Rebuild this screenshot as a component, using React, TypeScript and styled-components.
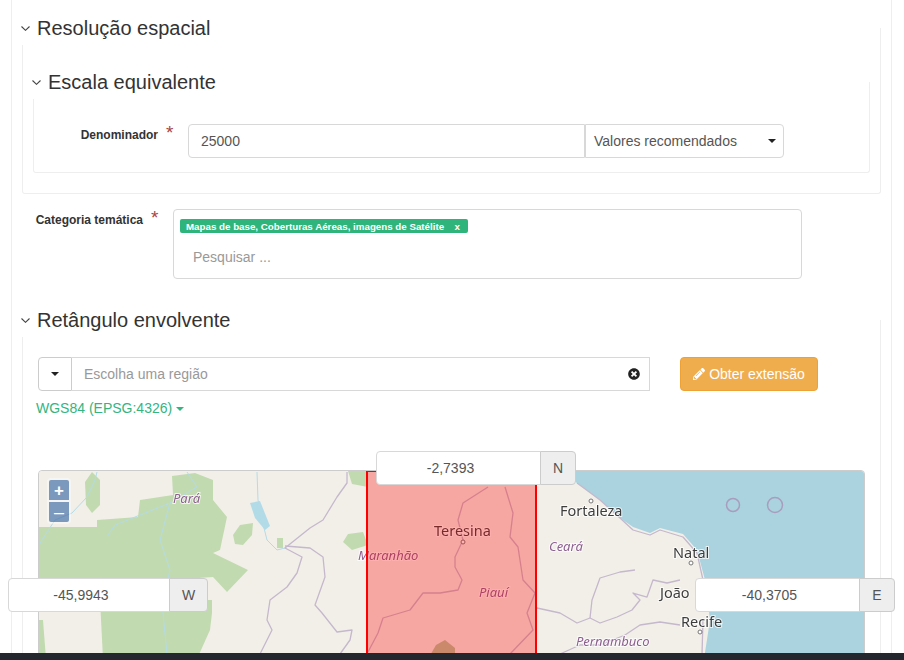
import React from 'react';
import styled, { createGlobalStyle } from 'styled-components';
import { FaPencilAlt, FaTimesCircle } from 'react-icons/fa';

const GlobalStyle = createGlobalStyle`
  html, body {
    margin: 0;
    padding: 0;
    background: #fff;
    font-family: "Liberation Sans", Arial, sans-serif;
    color: #333;
  }
  * {
    box-sizing: border-box;
  }
`;

const Page = styled.div`
  height: 660px;
  display: flex;
  flex-direction: column;
  overflow: hidden;
`;

const Sheet = styled.main`
  flex: 1;
  min-height: 0;
  width: 881px;
  margin-left: 11px;
  padding: 28px 10px 0;
  border-left: 1px solid #eee;
  border-right: 1px solid #eee;
`;

const FooterBar = styled.div`
  position: relative;
  z-index: 2;
  height: 7px;
  flex: none;
  background: #24272d;
`;

const Section = styled.section<{ $top?: number; $pad: string }>`
  display: flow-root;
  margin-top: ${(p) => p.$top ?? 0}px;
  padding: ${(p) => p.$pad};
  border: 1px solid #eee;
  border-top: none;
  border-radius: 0 0 3px 3px;
`;

const Title = styled.h4<{ $indent: number }>`
  width: fit-content;
  height: 34px;
  margin: -17px 0 0 ${(p) => p.$indent}px;
  position: relative;
  display: flex;
  align-items: center;
  gap: 7px;
  background: #fff;
  font-size: 20px;
  font-weight: 400;
  color: #333;
`;

const Chevron = () => (
  <svg width="9" height="5" viewBox="0 0 9 5" fill="none" stroke="#444" strokeWidth="1.1">
    <polyline points="0.5,0.5 4.5,4.3 8.5,0.5" />
  </svg>
);

const FormRow = styled.div<{ $top?: number }>`
  display: flex;
  align-items: flex-start;
  margin-top: ${(p) => p.$top ?? 0}px;
`;

const Label = styled.label<{ $width: number }>`
  flex: none;
  width: ${(p) => p.$width}px;
  padding: 3px 13px 0 0;
  text-align: right;
  font-size: 12px;
  font-weight: 700;
  line-height: 15px;
  color: #333;
`;

const Star = styled.span`
  display: inline-block;
  width: 10px;
  margin-left: 8px;
  margin-right: -1px;
  text-align: left;
  font-size: 19px;
  font-weight: 400;
  line-height: 12px;
  color: #a94442;
`;

const TextBox = styled.div<{ $width: number }>`
  width: ${(p) => p.$width}px;
  height: 34px;
  padding: 0 12px;
  display: flex;
  align-items: center;
  border: 1px solid #d8d8d8;
  border-radius: 4px 0 0 4px;
  font-size: 14px;
  color: #555;
`;

const SelectBox = styled.div`
  width: 199px;
  height: 34px;
  padding: 0 7px 0 8px;
  display: flex;
  align-items: center;
  justify-content: space-between;
  border: 1px solid #d8d8d8;
  border-radius: 0 4px 4px 0;
  font-size: 14px;
  color: #555;
`;

const Caret = styled.span<{ $color?: string }>`
  flex: none;
  width: 0;
  height: 0;
  border-top: 4px solid ${(p) => p.$color ?? '#222'};
  border-left: 4px solid transparent;
  border-right: 4px solid transparent;
`;

const TagBox = styled.div`
  width: 629px;
  height: 70px;
  padding: 9px 6px 0;
  border: 1px solid #d8d8d8;
  border-radius: 4px;
`;

const Tag = styled.div`
  width: 288px;
  height: 14px;
  padding: 0 8px 0 6px;
  display: flex;
  align-items: center;
  justify-content: space-between;
  background: #2fb57b;
  border-radius: 2px;
  font-size: 9.75px;
  font-weight: 700;
  color: #fff;
`;

const Placeholder = styled.div`
  margin: 15px 0 0 13px;
  font-size: 14px;
  line-height: 18px;
  color: #999;
`;

const SearchRow = styled.div`
  display: flex;
  margin: 20px 0 0;
`;

const DropAddon = styled.div`
  width: 34px;
  height: 34px;
  display: flex;
  align-items: center;
  justify-content: center;
  border: 1px solid #ccc;
  border-radius: 4px 0 0 4px;
`;

const SearchBox = styled.div`
  width: 578px;
  height: 34px;
  padding: 0 9px 0 12px;
  display: flex;
  align-items: center;
  justify-content: space-between;
  border: 1px solid #d8d8d8;
  border-left-width: 0;
  font-size: 14px;
  color: #999;
`;

const ActionButton = styled.button`
  width: 138px;
  height: 34px;
  margin-left: 30px;
  padding: 0;
  display: flex;
  align-items: center;
  justify-content: center;
  gap: 4px;
  background: #f0ad4e;
  border: 1px solid #eea236;
  border-radius: 4px;
  font-family: inherit;
  font-size: 14px;
  color: #fff;
`;

const ProjectionLink = styled.div`
  display: flex;
  align-items: center;
  gap: 4px;
  margin: 9px 0 0 -2px;
  font-size: 14px;
  line-height: 17px;
  color: #34b580;
`;

const MapFrame = styled.div`
  position: relative;
  width: 827px;
  height: 190px;
  margin-top: 53px;
  border: 1px solid #ccc;
  border-radius: 4px;
  background: #f2efe9;
`;

const MapDrawing = styled.svg`
  display: block;
  width: 825px;
  height: 188px;
  border-radius: 3px;
  filter: blur(0.4px);
`;

const PlaceLabel = styled.text<{ $italic?: boolean; $size: number }>`
  font-family: "Noto Sans", sans-serif;
  font-size: ${(p) => p.$size}px;
  font-style: ${(p) => (p.$italic ? 'italic' : 'normal')};
  fill: ${(p) => (p.$italic ? '#8c5f8f' : '#3d3d3d')};
  stroke: rgba(255, 255, 255, 0.75);
  stroke-width: 2px;
  paint-order: stroke;
`;

const ZoomControl = styled.div`
  position: absolute;
  left: 8px;
  top: 7px;
  padding: 2px;
  background: rgba(255, 255, 255, 0.4);
  border-radius: 4px;
`;

const ZoomButton = styled.div<{ $bottom?: boolean }>`
  width: 20px;
  height: 20px;
  margin-top: ${(p) => (p.$bottom ? 2 : 0)}px;
  display: flex;
  align-items: center;
  justify-content: center;
  background: rgba(0, 60, 136, 0.5);
  border-radius: ${(p) => (p.$bottom ? '0 0 2px 2px' : '2px 2px 0 0')};
  font-size: ${(p) => (p.$bottom ? 18 : 17)}px;
  font-weight: ${(p) => (p.$bottom ? 400 : 700)};
  line-height: 1;
  color: #fff;
`;

const CoordGroup = styled.div<{ $left: number; $top: number }>`
  position: absolute;
  left: ${(p) => p.$left}px;
  top: ${(p) => p.$top}px;
  display: flex;
  width: 200px;
  height: 34px;
  font-size: 14px;
  color: #555;
`;

const CoordInput = styled.div`
  flex: 1;
  display: flex;
  align-items: center;
  justify-content: center;
  padding-right: 16px;
  background: #fff;
  border: 1px solid #d8d8d8;
  border-radius: 4px 0 0 4px;
`;

const CoordAddon = styled.div<{ $width: number }>`
  flex: none;
  width: ${(p) => p.$width}px;
  margin-left: -1px;
  display: flex;
  align-items: center;
  justify-content: center;
  background: #eee;
  border: 1px solid #ccc;
  border-radius: 0 4px 4px 0;
`;

const forests = [
  '39,527 97,527 97,520 138,517 140,500 173,495 172,476 195,473 213,480 213,500 227,517 220,550 213,553 248,570 227,592 213,577 170,580 39,580',
  '100,600 212,600 212,613 210,630 197,659 103,659',
  '85,482 92,472 100,480 100,505 92,513 86,505',
  '233,535 240,525 253,523 252,535 243,545 235,544',
  '343,542 348,534 363,532 368,545 352,550',
  '348,471 368,471 368,487 352,484',
  '277,538 283,538 283,548 277,548',
  '39,620 43,620 46,659 39,659',
];

const rivers = [
  '97,472 95,480 87,497 72,513 55,520 40,543',
  '187,472 197,487 170,503 160,540 170,570 165,590 163,613 167,654',
  '257,472 258,500 262,520 267,540 277,550 285,548',
  '170,503 140,515 115,525 108,535',
];

const borders = [
  '347,472 347,483 337,497 323,520 310,528 285,548 302,557 297,573 287,587 270,600 267,620 272,630 260,654',
  '285,546 310,548 323,557 325,577 315,605 322,613 337,632 352,630 350,640 340,654',
  '488,487 463,503 458,520 463,540 455,557 455,567 462,580 458,590 440,593 423,593 410,610 383,618 378,633 368,652',
  '505,487 513,513 510,537 518,547 523,580 535,593 527,613 533,630 510,654',
  '537,608 560,613 577,623 590,618 600,623 617,617 632,610 640,600 633,593 647,597 653,580 667,583 680,580',
  '635,570 620,572 600,578 592,600 590,618',
  '560,654 580,645 600,645 625,635 640,625 660,622 680,625',
  '577,483 600,500 620,518 633,530 650,535 660,530 683,537 697,553 703,580',
  '703,620 702,654',
];

const labels = [
  { x: 173, y: 503, size: 13, italic: true, text: 'Pará' },
  { x: 358, y: 560, size: 13, italic: true, text: 'Maranhão' },
  { x: 479, y: 597, size: 13, italic: true, text: 'Piauí' },
  { x: 549, y: 551, size: 13, italic: true, text: 'Ceará' },
  { x: 576, y: 646, size: 13, italic: true, text: 'Pernambuco' },
  { x: 434, y: 536, size: 14.5, text: 'Teresina' },
  { x: 560, y: 516, size: 14.5, text: 'Fortaleza' },
  { x: 673, y: 558, size: 14.5, text: 'Natal' },
  { x: 660, y: 598, size: 14.5, text: 'João' },
  { x: 681, y: 627, size: 14.5, text: 'Recife' },
];

const cities = [
  [463, 542],
  [591, 501],
  [691, 563],
  [700, 632],
];

const RegionMap = () => (
  <MapDrawing viewBox="39 471 825 188">
    <rect x="39" y="471" width="825" height="188" fill="#f2efe9" />
    <polygon points="560,471 577,483 600,500 620,518 633,527 650,533 660,528 683,534 697,550 705,580 710,620 704,659 864,659 864,471" fill="#aad3df" />
    {forests.map((points) => (
      <polygon key={points} points={points} fill="#c2dab0" />
    ))}
    <polygon points="250,503 260,501 270,526 265,530 255,518" fill="#b2dbe8" />
    <polygon points="428,659 436,645 445,640 455,648 455,659" fill="#b4c49a" />
    {rivers.map((points) => (
      <polyline key={points} points={points} fill="none" stroke="#b3dbe6" strokeWidth="1" />
    ))}
    {borders.map((points) => (
      <polyline key={points} points={points} fill="none" stroke="#c4b8cc" strokeWidth="1.3" strokeLinejoin="round" />
    ))}
    <circle cx="733" cy="505" r="6.5" fill="none" stroke="#a99dbd" strokeWidth="1.5" />
    <circle cx="775" cy="505" r="7.5" fill="none" stroke="#a99dbd" strokeWidth="1.5" />
    {cities.map(([cx, cy]) => (
      <circle key={cx} cx={cx} cy={cy} r="2" fill="#fff" stroke="#777" />
    ))}
    {labels.map((label) => (
      <PlaceLabel key={label.text} x={label.x} y={label.y} $size={label.size} $italic={label.italic}>
        {label.text}
      </PlaceLabel>
    ))}
    <rect x="367" y="471" width="169" height="200" fill="rgba(255, 0, 0, 0.3)" stroke="#f00" strokeWidth="2" />
  </MapDrawing>
);

const App = () => (
  <Page>
    <GlobalStyle />
    <Sheet>
      <Section $pad="0 10px 20px">
        <Title $indent={-12}>
          <Chevron />
          Resolução espacial
        </Title>
        <Section $top={37} $pad="0 0 14px">
          <Title $indent={-2}>
            <Chevron />
            Escala equivalente
          </Title>
          <FormRow $top={25}>
            <Label $width={154}>
              Denominador
              <Star>*</Star>
            </Label>
            <TextBox $width={397}>25000</TextBox>
            <SelectBox>
              Valores recomendados
              <Caret />
            </SelectBox>
          </FormRow>
        </Section>
      </Section>

      <FormRow $top={15}>
        <Label $width={151}>
          Categoria temática
          <Star>*</Star>
        </Label>
        <TagBox>
          <Tag>
            <span>Mapas de base, Coberturas Aéreas, imagens de Satélite</span>
            <span>x</span>
          </Tag>
          <Placeholder>Pesquisar ...</Placeholder>
        </TagBox>
      </FormRow>

      <Section $top={41} $pad="0 15px">
        <Title $indent={-17}>
          <Chevron />
          Retângulo envolvente
        </Title>
        <SearchRow>
          <DropAddon>
            <Caret />
          </DropAddon>
          <SearchBox>
            Escolha uma região
            <FaTimesCircle size={12} color="#222" />
          </SearchBox>
          <ActionButton>
            <FaPencilAlt size={12} />
            Obter extensão
          </ActionButton>
        </SearchRow>
        <ProjectionLink>
          WGS84 (EPSG:4326)
          <Caret $color="#34b580" />
        </ProjectionLink>
        <MapFrame>
          <RegionMap />
          <ZoomControl>
            <ZoomButton>+</ZoomButton>
            <ZoomButton $bottom>–</ZoomButton>
          </ZoomControl>
          <CoordGroup $left={337} $top={-20}>
            <CoordInput>-2,7393</CoordInput>
            <CoordAddon $width={36}>N</CoordAddon>
          </CoordGroup>
          <CoordGroup $left={-31} $top={107}>
            <CoordInput>-45,9943</CoordInput>
            <CoordAddon $width={39}>W</CoordAddon>
          </CoordGroup>
          <CoordGroup $left={656} $top={107}>
            <CoordInput>-40,3705</CoordInput>
            <CoordAddon $width={36}>E</CoordAddon>
          </CoordGroup>
        </MapFrame>
      </Section>
    </Sheet>
    <FooterBar />
  </Page>
);

export default App;
